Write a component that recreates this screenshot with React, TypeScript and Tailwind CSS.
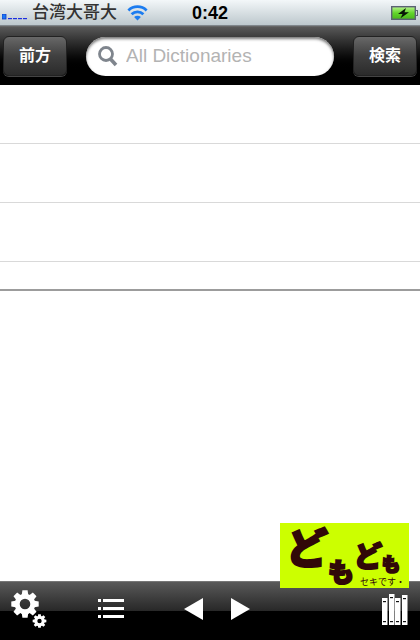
import React, { useState } from 'react';

interface BookSpine {
  x: number;
  top: number;
}

const spines: BookSpine[] = [
  { x: 0, top: 4 },
  { x: 7, top: 0 },
  { x: 13, top: 4 },
  { x: 20, top: 1 },
];

const gearAngles = [0, 45, 90, 135, 180, 225, 270, 315];

const Gear: React.FC<{ cx: number; cy: number; scale: number }> = ({ cx, cy, scale }) => (
  <g transform={`translate(${cx} ${cy}) scale(${scale})`} fill="#fff">
    <circle r="7.8" fill="none" stroke="#fff" strokeWidth="5" />
    {gearAngles.map((angle) => (
      <path key={angle} d="M-2.6 -13.7 H2.6 L3.4 -8 H-3.4 Z" transform={`rotate(${angle})`} />
    ))}
  </g>
);

const SettingsIcon = () => (
  <svg width="36" height="40" viewBox="0 0 36 40" aria-hidden="true">
    <Gear cx={14} cy={15} scale={1} />
    <Gear cx={28.5} cy={32} scale={0.5} />
    <circle cx="28.5" cy="32" r="3.4" fill="none" stroke="#fff" strokeWidth="2.4" />
  </svg>
);

const ListIcon = () => (
  <svg width="26" height="20" viewBox="0 0 26 20" fill="#fff" aria-hidden="true">
    {[0, 8, 16].map((y) => (
      <g key={y}>
        <rect x="0" y={y} width="3" height="3" />
        <rect x="5" y={y} width="21" height="3" />
      </g>
    ))}
  </svg>
);

const BooksIcon = () => (
  <svg width="26" height="31" viewBox="0 0 26 31" aria-hidden="true">
    {spines.map((spine) => (
      <g key={spine.x}>
        <rect x={spine.x} y={spine.top} width="5.5" height={31 - spine.top} fill="#fff" />
        <rect x={spine.x + 1} y={spine.top + 3} width="3" height="1.2" fill="#111" />
        <rect x={spine.x + 1} y="27" width="3" height="1.2" fill="#111" />
      </g>
    ))}
  </svg>
);

const WifiIcon = () => (
  <svg width="21" height="16" viewBox="0 0 20 16" fill="none" stroke="#1c7cf0" strokeWidth="2.8" aria-hidden="true">
    <path d="M0.9 5.4 A13 13 0 0 1 19.1 5.4" />
    <path d="M4.1 9.2 A8.4 8.4 0 0 1 15.9 9.2" />
    <path d="M10 15.5 L6.6 12 A4.9 4.9 0 0 1 13.4 12 Z" fill="#1c7cf0" stroke="none" />
  </svg>
);

const BatteryIcon = () => (
  <svg width="28" height="14" viewBox="0 0 28 14" aria-hidden="true">
    <defs>
      <linearGradient id="charge" x2="0" y2="1">
        <stop offset="0" stopColor="#b9f48f" />
        <stop offset="0.5" stopColor="#62d52a" />
        <stop offset="1" stopColor="#48b51c" />
      </linearGradient>
    </defs>
    <rect x="1.7" y="0.7" width="23.6" height="12.6" fill="url(#charge)" stroke="#5b6274" strokeWidth="1.4" />
    <rect x="25.5" y="4.5" width="2" height="5" fill="#d5dade" stroke="#5b6274" />
    <path d="M16 2 L8 8 L12.5 8 L10.5 12.3 L19 6.3 L14.5 6.3 Z" fill="#071507" />
  </svg>
);

const StatusBar = () => (
  <div className="grid h-[26px] shrink-0 grid-cols-[1fr_auto_1fr] items-center border-b border-[#7f868b] bg-gradient-to-b from-[#f3f7f9] to-[#bdc8cd] px-0.5">
    <div className="flex items-center">
      <svg className="mt-2" width="26" height="6" viewBox="0 0 26 6" aria-hidden="true">
        <rect width="4" height="5" fill="#1b78f5" stroke="#1238c4" strokeWidth="0.8" />
        {[6, 11, 16, 21].map((x) => (
          <rect key={x} x={x} y="4" width="4" height="1.2" fill="#1d2fe0" />
        ))}
      </svg>
      <span className="ml-1 text-[17px] leading-6 font-medium text-[#333]">台湾大哥大</span>
      <span className="ml-[10px]">
        <WifiIcon />
      </span>
    </div>
    <span className="text-lg leading-6 font-bold text-black">0:42</span>
    <div className="flex justify-end">
      <BatteryIcon />
    </div>
  </div>
);

const BarButton: React.FC<{ label: string }> = ({ label }) => (
  <button
    type="button"
    className="h-10 w-16 shrink-0 rounded-md border border-[#222] bg-gradient-to-b from-[#686868] via-[#404040] via-50% to-[#2b2b2b] text-base leading-6 font-bold text-white shadow-[0_1px_0_#444]"
  >
    {label}
  </button>
);

const App: React.FC = () => {
  const [query, setQuery] = useState('');

  return (
    <div className="relative flex min-h-screen flex-col bg-white font-['Liberation_Sans','Noto_Sans_CJK_JP',sans-serif]">
      <StatusBar />

      <header className="flex h-[59px] shrink-0 items-center border-t border-[#666] bg-gradient-to-b from-[#595959] to-black to-75% px-[3px]">
        <BarButton label="前方" />
        <label className="mx-[19px] flex h-[39px] min-w-0 flex-1 items-center rounded-full bg-white px-3 shadow-[inset_0_2px_3px_#777]">
          <svg className="shrink-0" width="20" height="21" viewBox="0 0 20 21" fill="none" stroke="#7f858d" aria-hidden="true">
            <circle cx="8" cy="8" r="6.5" strokeWidth="2.8" />
            <path d="M12.5 13 L18 19" strokeWidth="3.6" />
          </svg>
          <input
            type="text"
            aria-label="All Dictionaries"
            placeholder="All Dictionaries"
            value={query}
            onChange={(e) => setQuery(e.target.value)}
            className="ml-2 w-full min-w-0 bg-transparent text-[19px] leading-6 text-black outline-none placeholder:text-[#b3b3b3]"
          />
        </label>
        <BarButton label="検索" />
      </header>

      {/* Results */}
      <main className="flex-1">
        <ul>
          <li className="h-[59px] border-b border-[#d9d9d9]" />
          <li className="h-[59px] border-b border-[#d9d9d9]" />
          <li className="h-[59px] border-b border-[#d9d9d9]" />
          <li className="h-[29px] border-b-2 border-[#9c9c9c]" />
        </ul>
      </main>

      <footer className="flex h-[59px] shrink-0 items-center border-t border-[#777] bg-gradient-to-b from-[#5a5a5a] via-[#282828] via-50% to-black to-50% pr-3 pb-1 pl-[11px]">
        <button type="button" aria-label="Settings">
          <SettingsIcon />
        </button>
        <button type="button" aria-label="List" className="ml-[51px]">
          <ListIcon />
        </button>
        <button type="button" aria-label="Previous" className="ml-[60px]">
          <svg width="19" height="22" viewBox="0 0 19 22" fill="#fff" aria-hidden="true">
            <path d="M0 11 L19 0 V22 Z" />
          </svg>
        </button>
        <button type="button" aria-label="Next" className="ml-7">
          <svg width="19" height="22" viewBox="0 0 19 22" fill="#fff" aria-hidden="true">
            <path d="M19 11 L0 0 V22 Z" />
          </svg>
        </button>
        <button type="button" aria-label="Dictionaries" className="ml-auto">
          <BooksIcon />
        </button>
      </footer>

      {/* Signature stamp over the toolbar edge */}
      <div className="absolute right-[11px] bottom-[52px] flex h-[65px] w-[129px] flex-col justify-between bg-[#cf0] font-['Noto_Sans_CJK_JP',sans-serif] text-[#310808]">
        <div className="flex h-[52px] px-1.5 font-black [-webkit-text-stroke:2px_#310808]">
          <span className="text-[42px] leading-[46px]">ど</span>
          <span className="pt-8 text-[26px] leading-8">も</span>
          <span className="pt-4 text-[28px] leading-8">ど</span>
          <span className="pt-7 text-lg leading-6">も</span>
        </div>
        <span className="pr-1 text-right text-[9px] leading-3 whitespace-nowrap">セキです・</span>
      </div>
    </div>
  );
};

export default App;
